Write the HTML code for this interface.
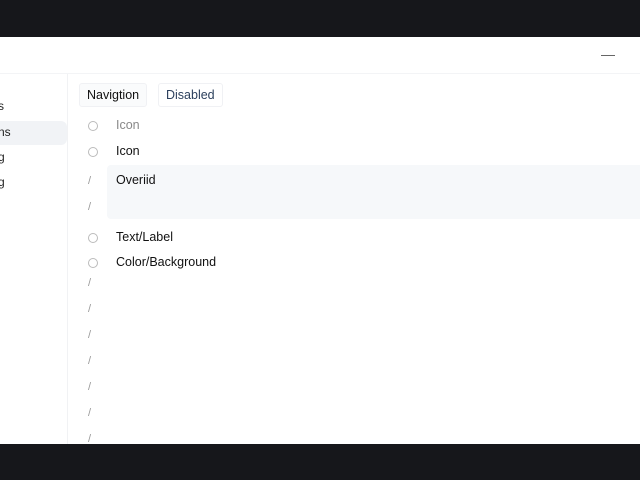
<!DOCTYPE html>
<html><head><style>
body{margin:0;width:640px;height:480px;background:#16171b;font-family:"Liberation Sans",sans-serif;overflow:hidden;position:relative}
.panel{position:absolute;left:0;top:37px;width:640px;height:407px;background:#fff}
.hdr{position:absolute;left:0;top:0;width:640px;height:36px;border-bottom:1px solid #f3f4f6}
.min{position:absolute;left:601px;top:18px;width:14px;height:1px;background:#666}
.side{position:absolute;left:0;top:37px;width:67px;height:370px;border-right:1px solid #f1f2f4}
.si{position:absolute;font-size:12px;color:#222}
.sel{position:absolute;left:0;top:84px;width:67px;height:24px;background:#f1f3f6;border-radius:0 6px 6px 0}
.tab{position:absolute;top:46px;height:22px;line-height:22px;font-size:12.5px;padding:0 7px;border:1px solid #f0f1f4;border-radius:3px}
.c{position:absolute;left:88px;width:8px;height:8px;border:1.3px solid #bbb;border-radius:50%}
.sl{position:absolute;left:88px;font-size:11px;color:#999}
.t{position:absolute;left:116px;font-size:12.5px;color:#111}
.hl{position:absolute;left:107px;top:128px;width:533px;height:54px;background:#f6f8fa;border-radius:4px 0 0 4px}
</style></head><body>
<div class="panel">
<div class="hdr"><div class="min"></div></div>
<div class="side"></div>
<div class="sel"></div>
<div class="si" style="left:-2px;top:62px">s</div>
<div class="si" style="left:-2px;top:88px">ns</div>
<div class="si" style="left:-2px;top:113px">g</div>
<div class="si" style="left:-2px;top:138px">g</div>
<div class="tab" style="left:79px;background:#fafbfc;color:#111">Navigtion</div>
<div class="tab" style="left:158px;color:#2b3f5c">Disabled</div>
<div class="hl"></div>
<div class="c" style="top:84px"></div><div class="t" style="top:81px;color:#888">Icon</div>
<div class="c" style="top:110px"></div><div class="t" style="top:107px">Icon</div>
<div class="sl" style="top:138px">/</div><div class="t" style="top:136px">Overiid</div>
<div class="sl" style="top:164px">/</div>
<div class="c" style="top:196px"></div><div class="t" style="top:193px">Text/Label</div>
<div class="c" style="top:221px"></div><div class="t" style="top:218px">Color/Background</div>
<div class="sl" style="top:240px">/</div>
<div class="sl" style="top:266px">/</div>
<div class="sl" style="top:292px">/</div>
<div class="sl" style="top:318px">/</div>
<div class="sl" style="top:344px">/</div>
<div class="sl" style="top:370px">/</div>
<div class="sl" style="top:396px">/</div>
</div>
</body></html>
